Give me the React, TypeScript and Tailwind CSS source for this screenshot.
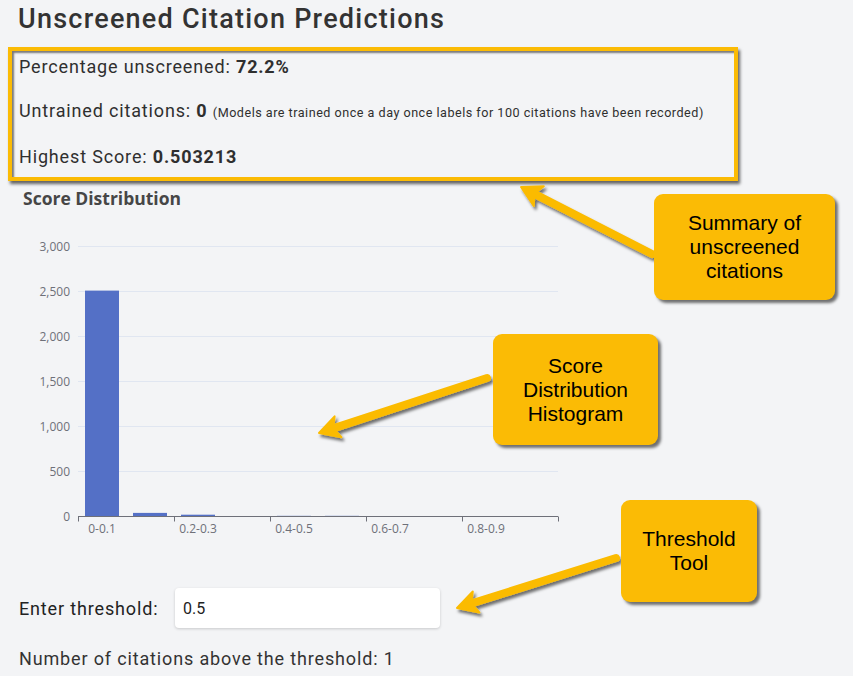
import React from 'react';

const ORANGE = '#fbbb05';

// histogram counts per 0.1 bucket
const buckets = [
  { label: '0-0.1', value: 2510 },
  { label: '0.1-0.2', value: 40 },
  { label: '0.2-0.3', value: 20 },
  { label: '0.3-0.4', value: 0 },
  { label: '0.4-0.5', value: 8 },
  { label: '0.5-0.6', value: 4 },
  { label: '0.6-0.7', value: 0 },
  { label: '0.7-0.8', value: 0 },
  { label: '0.8-0.9', value: 0 },
  { label: '0.9-1', value: 0 },
];

const AXIS_Y = 514.5;
const LEFT = 78;
const CAT_W = 48;
const PX_PER_UNIT = 45 / 500;

function ScoreChart() {
  const ticks = [0, 500, 1000, 1500, 2000, 2500, 3000];
  return (
    <svg width={600} height={366} viewBox="0 179 600 366" className="block">
      <text x={23} y={203} fill="#464646" fontSize={17.5} fontWeight={700} fontFamily="'Open Sans', sans-serif">
        Score Distribution
      </text>
      {ticks.map((t) => {
        const y = AXIS_Y - t * PX_PER_UNIT;
        return (
          <g key={t}>
            {t > 0 && <line x1={LEFT} x2={LEFT + CAT_W * 10} y1={y} y2={y} stroke="#e0e6f1" strokeWidth={1} />}
            <text x={70} y={y + 4} textAnchor="end" fill="#6e7079" fontSize={12} fontFamily="'Open Sans', sans-serif">
              {t.toLocaleString('en-US')}
            </text>
          </g>
        );
      })}
      {buckets.map((b, i) => {
        const h = Math.max(b.value * PX_PER_UNIT, b.value > 0 ? 1 : 0);
        const cx = LEFT + CAT_W * i + CAT_W / 2;
        return h > 0 ? (
          <rect key={b.label} x={cx - 17} y={AXIS_Y - h} width={34} height={h} fill="#5470c6" opacity={b.value < 10 ? 0.35 : 1} />
        ) : null;
      })}
      <line x1={LEFT} x2={LEFT + CAT_W * 10} y1={AXIS_Y} y2={AXIS_Y} stroke="#6e7079" strokeWidth={1} />
      {[0, 2, 4, 6, 8, 10].map((i) => (
        <line key={i} x1={LEFT + CAT_W * i + 0.5} x2={LEFT + CAT_W * i + 0.5} y1={AXIS_Y} y2={AXIS_Y + 5} stroke="#6e7079" strokeWidth={1} />
      ))}
      {buckets.map((b, i) =>
        i % 2 === 0 ? (
          <text key={b.label} x={LEFT + CAT_W * i + CAT_W / 2} y={531} textAnchor="middle" fill="#6e7079" fontSize={12} fontFamily="'Open Sans', sans-serif">
            {b.label}
          </text>
        ) : null
      )}
    </svg>
  );
}

function Arrow({ from, to }: { from: [number, number]; to: [number, number] }) {
  const [x1, y1] = from;
  const [x2, y2] = to;
  const len = Math.hypot(x2 - x1, y2 - y1);
  const ux = (x2 - x1) / len;
  const uy = (y2 - y1) / len;
  const px = -uy;
  const py = ux;
  const headLen = 20;
  const bx = x2 - ux * headLen;
  const by = y2 - uy * headLen;
  const nx = x2 - ux * (headLen - 5);
  const ny = y2 - uy * (headLen - 5);
  const pts = [
    [x2, y2],
    [bx + px * 11, by + py * 11],
    [nx, ny],
    [bx - px * 11, by - py * 11],
  ]
    .map((p) => p.join(','))
    .join(' ');
  return (
    <g filter="url(#shadow)">
      <line x1={x1} y1={y1} x2={nx} y2={ny} stroke={ORANGE} strokeWidth={8} strokeLinecap="round" />
      <polygon points={pts} fill={ORANGE} stroke={ORANGE} strokeWidth={2} strokeLinejoin="round" />
    </g>
  );
}

function Callout({ className, children }: { className: string; children: React.ReactNode }) {
  return (
    <div
      className={`absolute flex items-center justify-center text-center rounded-[9px] bg-[#fbbb05] text-black text-[21px] leading-[24px] font-['Liberation_Sans',Arial,sans-serif] shadow-[3px_3px_3px_rgba(0,0,0,0.55)] ${className}`}
    >
      {children}
    </div>
  );
}

export default function App() {
  return (
    <div className="relative w-[853px] h-[676px] overflow-hidden bg-[#f3f4f6] font-['Roboto',sans-serif] text-[#333]">
      <h1 className="pl-[18px] pt-[1px] text-[27px] leading-[36px] font-medium tracking-[0.046em] text-[#333]">
        Unscreened Citation Predictions
      </h1>

      <div className="ml-[8px] mt-[10px] w-[730px] border-4 border-[#fbbb05] pl-[7px] pt-[2px] pb-[6px] flex flex-col gap-4 text-[18px] leading-[28px] tracking-[0.047em] text-[#2f2f2f] shadow-[2px_3px_3px_rgba(0,0,0,0.6),inset_2px_2px_2px_rgba(0,0,0,0.5)]">
        <div>
          Percentage unscreened: <span className="font-bold">72.2%</span>
        </div>
        <div className="whitespace-nowrap">
          Untrained citations: <span className="font-bold">0</span>{' '}
          <span className="text-[12.6px] tracking-[0.5px]">(Models are trained once a day once labels for 100 citations have been recorded)</span>
        </div>
        <div>
          Highest Score: <span className="font-bold">0.503213</span>
        </div>
      </div>

      <ScoreChart />

      <div className="mt-[41px] flex items-center pl-[19px]">
        <span className="w-[156px] text-[18px] tracking-[0.047em] text-[#222]">Enter threshold:</span>
        <input
          readOnly
          value="0.5"
          className="w-[265px] h-[40px] rounded-[4px] bg-white px-[8px] text-[16px] text-[#222] shadow-[0_1px_3px_rgba(0,0,0,0.18)] outline-none"
        />
      </div>

      <div className="mt-[17px] pl-[19px] text-[18px] leading-[28px] tracking-[0.047em] text-[#333]">
        Number of citations above the threshold: 1
      </div>

      <svg className="absolute inset-0 pointer-events-none" width={853} height={676}>
        <defs>
          <filter id="shadow" x="-20%" y="-20%" width="140%" height="140%">
            <feDropShadow dx={2} dy={3} stdDeviation={1.5} floodColor="#000" floodOpacity={0.55} />
          </filter>
        </defs>
        <Arrow from={[652, 254]} to={[521, 187]} />
        <Arrow from={[487, 378]} to={[319, 433]} />
        <Arrow from={[616, 558]} to={[457, 608]} />
      </svg>

      <Callout className="left-[654px] top-[194px] w-[181px] h-[106px]">
        Summary of
        <br />
        unscreened
        <br />
        citations
      </Callout>
      <Callout className="left-[493px] top-[334px] w-[165px] h-[111px]">
        Score
        <br />
        Distribution
        <br />
        Histogram
      </Callout>
      <Callout className="left-[621px] top-[500px] w-[136px] h-[102px]">
        Threshold
        <br />
        Tool
      </Callout>
    </div>
  );
}
